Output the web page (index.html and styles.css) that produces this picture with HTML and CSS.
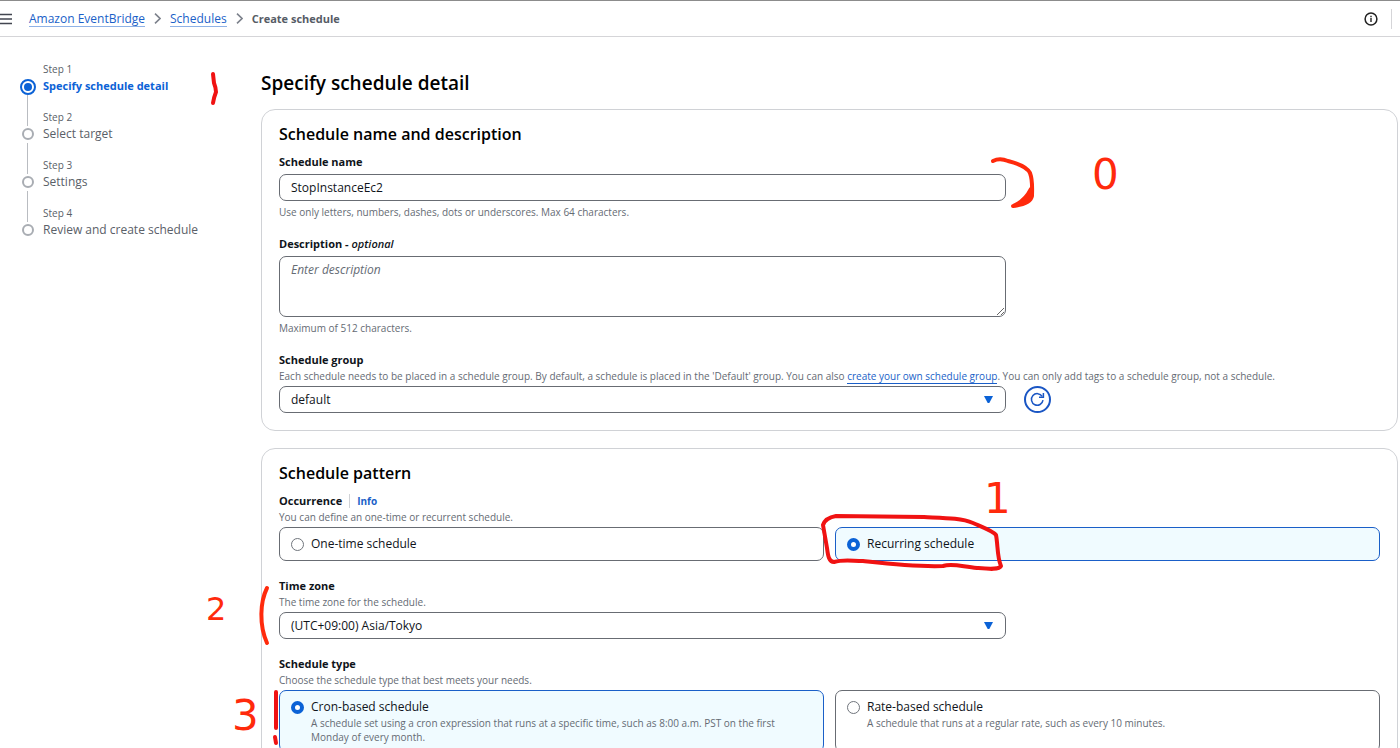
FILE: index.html
```html
<!DOCTYPE html>
<html lang="en">
<head>
    <meta charset="UTF-8">
    <meta name="viewport" content="width=device-width, initial-scale=1.0">
    <title>Create schedule</title>
    <link rel="stylesheet" href="styles.css">
</head>
<body>
    <header class="topbar">
        <button class="icon-btn menu-btn" aria-label="Menu">
            <svg width="14" height="12" viewBox="0 0 14 12"><path d="M0 1.5h12M0 6h12M0 10.5h12" stroke="#424650" stroke-width="1.6"/></svg>
        </button>
        <nav class="breadcrumb">
            <a href="#">Amazon EventBridge</a>
            <svg width="7" height="11" viewBox="0 0 7 11"><path d="M1 .7l5 4.8-5 4.8" fill="none" stroke="#7d828c" stroke-width="1.6"/></svg>
            <a href="#">Schedules</a>
            <svg width="7" height="11" viewBox="0 0 7 11"><path d="M1 .7l5 4.8-5 4.8" fill="none" stroke="#7d828c" stroke-width="1.6"/></svg>
            <span class="current">Create schedule</span>
        </nav>
        <button class="icon-btn info-btn" aria-label="Info">
            <svg width="14" height="14" viewBox="0 0 14 14"><circle cx="7" cy="7" r="5.9" fill="none" stroke="#222" stroke-width="1.5"/><path d="M7 6v4M7 3.8v1.4" stroke="#222" stroke-width="1.4"/></svg>
        </button>
    </header>

    <div class="layout">
        <ol class="steps">
            <li class="step active"><span class="dot"></span><small>Step 1</small><span class="name">Specify schedule detail</span></li>
            <li class="step"><span class="dot"></span><small>Step 2</small><span class="name">Select target</span></li>
            <li class="step"><span class="dot"></span><small>Step 3</small><span class="name">Settings</span></li>
            <li class="step"><span class="dot"></span><small>Step 4</small><span class="name">Review and create schedule</span></li>
        </ol>

        <main>
            <h1>Specify schedule detail</h1>

            <section class="card">
                <h2>Schedule name and description</h2>
                <div class="field">
                    <label class="label" for="name">Schedule name</label>
                    <input class="control" type="text" id="name" value="StopInstanceEc2">
                    <p class="hint below">Use only letters, numbers, dashes, dots or underscores. Max 64 characters.</p>
                </div>
                <div class="field">
                    <label class="label" for="description">Description - <em>optional</em></label>
                    <textarea class="control" id="description" placeholder="Enter description"></textarea>
                    <p class="hint below">Maximum of 512 characters.</p>
                </div>
                <div class="field">
                    <label class="label" for="group">Schedule group</label>
                    <p class="hint">Each schedule needs to be placed in a schedule group. By default, a schedule is placed in the 'Default' group. You can also <a href="#">create your own schedule group</a>. You can only add tags to a schedule group, not a schedule.</p>
                    <div class="row">
                        <div class="select">
                            <select class="control" id="group"><option>default</option></select>
                            <svg class="caret" width="9" height="7" viewBox="0 0 9 7"><path d="M0 0h9L5.3 7H3.7z" fill="#0b62d6"/></svg>
                        </div>
                        <button class="refresh-btn" aria-label="Refresh">
                            <svg width="15" height="15" viewBox="0 0 15 15" fill="none" stroke="#1a56c4" stroke-width="1.5"><path d="M13 8.2A5.8 5.8 0 1 1 12.2 4.4"/><path d="M13.4 1v4.2H9"/></svg>
                        </button>
                    </div>
                </div>
            </section>

            <section class="card">
                <h2>Schedule pattern</h2>
                <div class="field" role="radiogroup" aria-labelledby="occurrence">
                    <div class="label"><span id="occurrence">Occurrence</span><a class="info" href="#">Info</a></div>
                    <p class="hint">You can define an one-time or recurrent schedule.</p>
                    <div class="tiles">
                        <label class="tile"><input type="radio" name="occurrence"><span>One-time schedule</span></label>
                        <label class="tile selected"><input type="radio" name="occurrence" checked><span>Recurring schedule</span></label>
                    </div>
                </div>
                <div class="field">
                    <label class="label" for="timezone">Time zone</label>
                    <p class="hint">The time zone for the schedule.</p>
                    <div class="select">
                        <select class="control" id="timezone"><option>(UTC+09:00) Asia/Tokyo</option></select>
                        <svg class="caret" width="9" height="7" viewBox="0 0 9 7"><path d="M0 0h9L5.3 7H3.7z" fill="#0b62d6"/></svg>
                    </div>
                </div>
                <div class="field" role="radiogroup" aria-labelledby="type">
                    <div class="label" id="type">Schedule type</div>
                    <p class="hint">Choose the schedule type that best meets your needs.</p>
                    <div class="tiles">
                        <label class="tile selected"><input type="radio" name="type" checked><span>Cron-based schedule<small>A schedule set using a cron expression that runs at a specific time, such as 8:00 a.m. PST on the first Monday of every month.</small></span></label>
                        <label class="tile"><input type="radio" name="type"><span>Rate-based schedule<small>A schedule that runs at a regular rate, such as every 10 minutes.</small></span></label>
                    </div>
                </div>
            </section>
        </main>
    </div>

    <!-- red pen notes on top of the form -->
    <svg class="ink" width="1400" height="748" viewBox="0 0 1400 748">
        <path class="pen dark" d="M213 74l1 9q2 5 2 9q-2 5-3 11"/>
        <path class="pen" d="M993 161c4-2 10-2 15 0c8 2 19 6 22 12c3 8 2 17 2 23c-1 6-10 9-19 10c8-3 14-9 18-17M1022 202l8-8"/>
        <path class="pen dark" d="M834 562c-5 0-6-6-7-14l-4-23c2-6 7-8 13-9l88 1c20 1 37 1 49 6c9 4 20 8 23 12c2 10 1 22 5 31c-2 4-12 3-24 2c-14-1-24-5-34-2c-30 1-62-3-80-5c-11 0-19-2-29 1z"/>
        <path class="pen" d="M267 588c-7 14-8 37 0 55"/>
        <path class="pen dark" d="M276 692v36M275 737l1 6"/>
        <text class="note" x="1092" y="189">0</text>
        <text class="note" x="984" y="513">1</text>
        <text class="note small" x="206" y="620">2</text>
        <text class="note" x="232" y="730">3</text>
    </svg>
</body>
</html>
```
FILE: styles.css
```css
* { box-sizing: border-box; }
body { margin: 0; position: relative; background-color: #fff; color: #0f141a; font-family: 'Open Sans', 'Noto Sans', sans-serif; font-size: 12px; line-height: 18px; }
h1, h2, p, ol { margin: 0; padding: 0; }
a { color: #1a5fc8; text-decoration: none; }
button { padding: 0; background: none; border: none; cursor: pointer; }
svg { display: block; }

.topbar { display: flex; align-items: center; height: 37px; padding-right: 8px; border-top: 1px solid #8c8c8c; border-bottom: 1px solid #d5d5d8; }
.menu-btn { margin-right: 15px; }
.breadcrumb { display: flex; align-items: center; gap: 9px; flex: 1; }
.breadcrumb a { line-height: 15px; border-bottom: 1px solid #8fb2e6; }
.breadcrumb .current { color: #565c66; font-size: 11px; font-weight: 700; }
.info-btn { padding-right: 13px; height: 20px; border-right: 1px solid #d5d5d8; }

.layout { display: flex; padding: 24px 2px 0 20px; }
.steps { width: 241px; flex: none; list-style: none; color: #5a6068; }
.step { position: relative; height: 48px; padding-left: 23px; }
.step small { display: block; font-size: 10px; line-height: 16px; }
.step .name { display: block; }
.step .dot { position: absolute; left: 2px; top: 19px; width: 12px; height: 12px; border: 2px solid #a9adb3; border-radius: 50%; background: #fff; }
.step:not(:last-child)::after { content: ''; position: absolute; left: 7px; top: 34px; width: 1px; height: 31px; background: #b9bcc1; }
.step.active .name { color: #0b62d6; font-size: 11px; font-weight: 700; }
.step.active .dot { left: 0; top: 18px; width: 16px; height: 16px; border-color: #0b62d6; }
.step.active .dot::after { content: ''; position: absolute; left: 2px; top: 2px; width: 8px; height: 8px; border-radius: 50%; background: #0b62d6; }

main { flex: 1; min-width: 0; }
h1 { padding: 8px 0 12px; font-size: 19px; line-height: 28px; font-weight: 600; color: #000; }
.card { padding: 12px 17px 17px; margin-bottom: 17px; border: 1px solid #d0d2d6; border-radius: 14px; }
h2 { margin-bottom: 7px; font-size: 16px; line-height: 24px; font-weight: 600; color: #000; }
.field + .field { margin-top: 16px; }
.label { display: block; font-size: 11px; font-weight: 700; }
.label em { font-weight: 600; }
.info { margin-left: 7px; padding-left: 7px; border-left: 1px solid #d0d2d6; font-size: 10px; }
.hint { font-size: 10px; line-height: 14px; color: #656b74; }
.hint a { border-bottom: 1px solid #1a5fc8; }
.below { margin-top: 4px; }

.control { display: block; width: 66%; height: 27px; margin-top: 3px; padding: 0 11px; border: 1px solid #686c73; border-radius: 7px; background: #fff; color: #0f141a; font: inherit; }
textarea.control { height: 61px; padding-top: 4px; line-height: 18px; resize: vertical; }
.control::placeholder { color: #656b74; font-style: italic; }
.select { position: relative; width: 66%; margin-top: 3px; }
.select .control { width: 100%; margin-top: 0; appearance: none; }
.caret { position: absolute; right: 13px; top: 10px; pointer-events: none; }
.row { display: flex; gap: 18px; }
.row .select { flex: none; }
.refresh-btn { display: grid; place-items: center; width: 27px; height: 27px; margin-top: 3px; border: 2px solid #1a56c4; border-radius: 50%; }

.tiles { display: grid; grid-template-columns: 1fr 1fr; gap: 11px; margin-top: 3px; }
.tile { display: flex; gap: 7px; padding: 7px 11px; border: 1px solid #686c73; border-radius: 7px; }
.tile small { display: block; font-size: 10px; line-height: 14px; color: #656b74; }
.tile.selected { border-color: #1a5fc8; background: #f0fbff; }
.tile input { appearance: none; flex: none; width: 13px; height: 13px; margin: 3px 0 0; border: 1px solid #70757c; border-radius: 50%; background: #fff; }
.tile input:checked { border: 4px solid #0b62d6; }

.ink { position: absolute; left: 0; top: 0; pointer-events: none; }
.pen { fill: none; stroke: #ff2a0c; stroke-width: 4; stroke-linecap: round; stroke-linejoin: round; }
.pen.dark { stroke: #f01212; }
.note { fill: #ff2a0c; font: 42px 'DejaVu Sans', sans-serif; }
.note.small { font-size: 32px; }
```
